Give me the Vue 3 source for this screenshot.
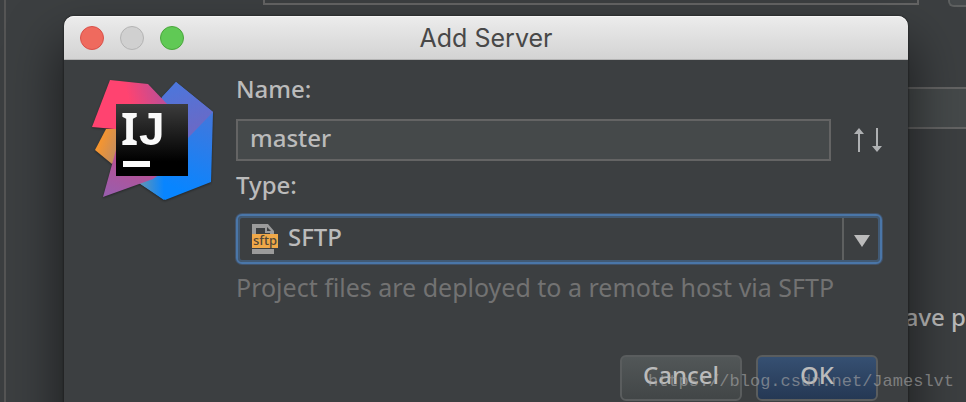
<script setup>
import { ref } from 'vue'

const name = ref('master')
const type = ref('SFTP')
const types = ['SFTP']
</script>

<template>
  <main class="desktop">
    <div class="settings" aria-hidden="true">
      <div class="settings__top">
        <span class="settings__combo"></span>
        <span class="settings__more"></span>
      </div>
      <div class="settings__field"></div>
      <p class="settings__text">ave p</p>
    </div>

    <form class="dialog" role="dialog" aria-labelledby="dialog-title" @submit.prevent>
      <header class="titlebar">
        <div class="titlebar__lights">
          <button class="light light--close" type="button" aria-label="Close"></button>
          <button class="light light--disabled" type="button" aria-label="Minimize" disabled></button>
          <button class="light light--zoom" type="button" aria-label="Zoom"></button>
        </div>
        <h1 class="titlebar__title" id="dialog-title">Add Server</h1>
      </header>

      <div class="dialog__body">
        <svg class="logo" viewBox="0 0 122 124" aria-hidden="true">
          <defs>
            <linearGradient id="pink" x1="0" y1="0.3" x2="1" y2="0.1">
              <stop offset="0.45" stop-color="#ff4370" />
              <stop offset="1" stop-color="#b0509e" />
            </linearGradient>
            <linearGradient id="violet" x1="0.2" y1="0" x2="0.6" y2="1">
              <stop offset="0" stop-color="#4a77dd" />
              <stop offset="1" stop-color="#6d68c4" />
            </linearGradient>
            <linearGradient id="blue" x1="0.7" y1="0.2" x2="0.5" y2="0.9">
              <stop offset="0" stop-color="#4277dc" />
              <stop offset="1" stop-color="#0885ff" />
            </linearGradient>
            <linearGradient id="teal" x1="0" y1="0" x2="1" y2="0">
              <stop offset="0" stop-color="#6695b0" />
              <stop offset="1" stop-color="#0885ff" />
            </linearGradient>
            <linearGradient id="orange" x1="0" y1="0" x2="1" y2="0.4">
              <stop offset="0.2" stop-color="#fb962a" />
              <stop offset="1" stop-color="#b58a6c" />
            </linearGradient>
            <linearGradient id="purple" x1="0.7" y1="0" x2="0.2" y2="1">
              <stop offset="0" stop-color="#c54b88" />
              <stop offset="1" stop-color="#9a5dac" />
            </linearGradient>
            <linearGradient id="plate" x1="0" y1="0" x2="0" y2="1">
              <stop offset="0" stop-color="#3c3c3c" />
              <stop offset="0.8" stop-color="#000" />
            </linearGradient>
          </defs>
          <path d="M14 49L3 70l17 14 14-14V49z" fill="url(#orange)" />
          <path d="M84 2l37 30-2 70-46 18-26-17 23-86z" fill="url(#blue)" />
          <path d="M47 103l25-11v28z" fill="url(#teal)" />
          <path d="M84 2l37 30-25 26-32-34z" fill="url(#violet)" />
          <path d="M18 0l38 4 20 21-20 27L0 47z" fill="url(#pink)" />
          <path d="M24 70L11 117l50-18 14-10z" fill="url(#purple)" />
          <path d="M24 24h72v72H24z" fill="url(#plate)" />
          <text class="logo__i" x="29" y="65">I</text>
          <text class="logo__j" x="47" y="65">J</text>
          <path d="M31 81h27v6H31z" fill="#fafafa" />
        </svg>

        <div class="fields">
          <label class="label" for="server-name">Name:</label>
          <div class="name-row">
            <input id="server-name" v-model="name" class="name-row__input" type="text" />
            <svg class="name-row__arrows" viewBox="0 0 28 24" aria-hidden="true">
              <path d="M5 0L10 6H6v18H4V6H0zM22 0h2v18h4l-5 6-5-6h4z" fill="#afb1b3" />
            </svg>
          </div>

          <label class="label label--type" for="server-type">Type:</label>
          <div class="combo">
            <select id="server-type" v-model="type" class="combo__select">
              <option v-for="item in types" :key="item" :value="item">{{ item }}</option>
            </select>
            <svg class="combo__icon" viewBox="0 0 26 30" aria-hidden="true">
              <path d="M0 0h16l6 7v3h-4V9h-5V4H4v6H0z" fill="#9b9b9b" />
              <path d="M15 3l4 4h-4z" fill="#3c3f41" />
              <path d="M0 25h22v5H0z" fill="#9b9b9b" />
              <path d="M0 10h26v14H0z" fill="#f0a848" />
              <text class="combo__badge" x="1" y="21">sftp</text>
            </svg>
            <span class="combo__button" aria-hidden="true">
              <svg class="combo__triangle" viewBox="0 0 16 12">
                <path d="M0 0h16L8 12z" fill="#bbb" />
              </svg>
            </span>
          </div>
          <p class="hint">Project files are deployed to a remote host via SFTP</p>
        </div>
      </div>

      <footer class="actions">
        <button class="button" type="button">Cancel</button>
        <button class="button button--primary" type="submit">OK</button>
      </footer>
    </form>

    <p class="watermark">https://blog.csdn.net/Jameslvt</p>
  </main>
</template>

<style>
body {
  background: #3c3f41;
}
</style>

<style scoped>
.desktop {
  position: relative;
  display: grid;
  grid-template-columns: minmax(0, 1fr);
  height: 100vh;
  overflow: hidden;
  background: #3c3f41;
  color: #bbb;
  font-family: 'Noto Sans', 'Open Sans', sans-serif;
  font-size: 24px;
  font-weight: 500;
  line-height: 32px;
}

.desktop * {
  box-sizing: border-box;
}

.settings,
.dialog {
  grid-area: 1 / 1;
}

.settings {
  margin-left: 4px;
  border-left: 2px solid #555;
}

.settings__top {
  display: flex;
  align-items: flex-start;
  gap: 29px;
  margin-left: 257px;
}

.settings__combo {
  flex: 1;
  height: 5px;
  border: 2px solid #646464;
  border-top: 0;
}

.settings__more {
  width: 18px;
  height: 7px;
  border: 2px solid #5e6060;
  border-width: 0 0 2px 2px;
  border-bottom-left-radius: 6px;
  background: #45494b;
}

.settings__field {
  height: 42px;
  margin-top: 80px;
  margin-left: 257px;
  border: 2px solid #646464;
  border-right: 0;
  background: #45494a;
}

.settings__text {
  margin: 172px 0 0;
  text-align: right;
  white-space: nowrap;
}

.dialog {
  margin: 16px 58px 0 64px;
  height: 520px;
  border-radius: 10px;
  background: #3c3f41;
  box-shadow: 0 0 2px #111, 0 30px 50px 6px rgba(0, 0, 0, 0.5);
}

.titlebar {
  display: grid;
  grid-template-columns: 1fr auto 1fr;
  align-items: center;
  height: 44px;
  padding: 0 16px;
  border-bottom: 1px solid #b4b4b4;
  border-radius: 10px 10px 0 0;
  background: linear-gradient(#ececec, #d3d3d3);
  box-shadow: inset 0 1px #f6f6f6;
}

.titlebar__lights {
  display: flex;
  gap: 16px;
}

.light {
  width: 24px;
  height: 24px;
  padding: 0;
  border: 1px solid #b4b4b4;
  border-radius: 50%;
  background: #d0d0d0;
}

.light--close {
  border-color: #d9514a;
  background: #ef6a5e;
}

.light--zoom {
  border-color: #4aa63c;
  background: #60c955;
}

.titlebar__title {
  margin: 0;
  color: #484848;
  font-family: Inter, sans-serif;
  font-size: 25px;
  font-weight: 400;
}

.dialog__body {
  display: flex;
  gap: 22px;
  padding: 13px 26px 0 28px;
}

.logo {
  flex: none;
  width: 122px;
  height: 124px;
  margin-top: 7px;
  filter: drop-shadow(0 1px 1px rgba(0, 0, 0, 0.4));
}

.logo text {
  fill: #fafafa;
  font-weight: 700;
}

.logo__i {
  font-family: 'Noto Sans', sans-serif;
  font-size: 44px;
}

.logo__j {
  font-family: 'Liberation Sans', sans-serif;
  font-size: 46px;
}

.fields {
  display: flex;
  flex: 1;
  flex-direction: column;
  min-width: 0;
}

.name-row {
  display: flex;
  align-items: center;
  gap: 23px;
  margin-top: 14px;
}

.name-row__input {
  flex: 1;
  min-width: 0;
  height: 42px;
  padding: 0 12px 6px;
  border: 2px solid #646464;
  border-radius: 0;
  outline: none;
  background: #45494a;
  color: #bbb;
  font: inherit;
}

.name-row__arrows {
  width: 28px;
  height: 24px;
}

.label--type {
  margin-top: 8px;
}

.combo {
  display: grid;
  grid-template-columns: 52px minmax(0, 1fr) 40px;
  align-items: center;
  height: 50px;
  margin-top: 13px;
}

.combo__select {
  grid-area: 1 / 1 / 2 / 4;
  width: 100%;
  height: 50px;
  padding: 0 42px 4px 50px;
  border: 2px solid #4a76a8;
  border-radius: 6px;
  outline: none;
  background: #3c3f41;
  box-shadow: inset 0 0 0 2px #425a74, 0 0 0 1px #42536a;
  color: #bbb;
  font: inherit;
  appearance: none;
}

.combo__icon {
  grid-area: 1 / 1;
  width: 26px;
  height: 30px;
  margin-left: 16px;
  pointer-events: none;
}

.combo__badge {
  fill: #4f4638;
  font-size: 13px;
}

.combo__button {
  grid-area: 1 / 3;
  display: flex;
  align-items: center;
  height: 42px;
  padding: 4px 0 0 10px;
  border-left: 2px solid #5e6060;
  pointer-events: none;
}

.combo__triangle {
  width: 16px;
  height: 12px;
}

.hint {
  margin: 7px 0 0;
  color: #727272;
  font-size: 25px;
  font-weight: 400;
  white-space: nowrap;
}

.actions {
  display: flex;
  justify-content: flex-end;
  gap: 14px;
  padding: 52px 30px 0;
}

.button {
  width: 122px;
  height: 46px;
  padding: 0 0 6px;
  border: 2px solid #5a5d5e;
  border-radius: 6px;
  background: linear-gradient(#525758, #424647);
  color: #bbb;
  font: inherit;
}

.button--primary {
  background: linear-gradient(#365072, #253854);
}

/* stamped over the dialog and its buttons */
.watermark {
  position: absolute;
  right: 12px;
  bottom: 4px;
  margin: 0;
  color: rgba(170, 170, 170, 0.6);
  font-family: 'Liberation Mono', monospace;
  font-size: 17px;
  font-weight: 400;
  pointer-events: none;
}
</style>
